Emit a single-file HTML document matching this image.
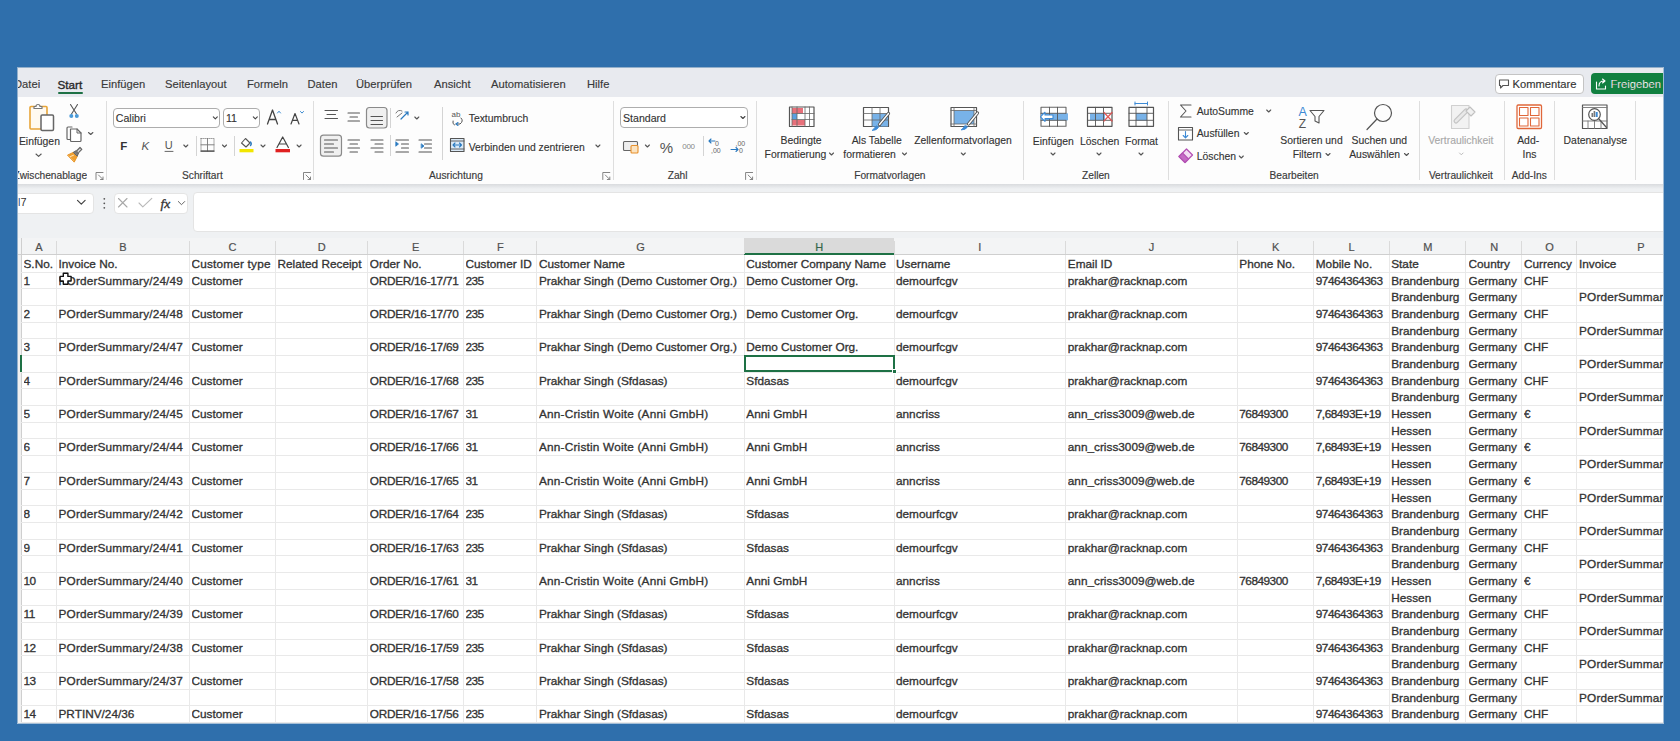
<!DOCTYPE html>
<html><head><meta charset="utf-8">
<style>
*{margin:0;padding:0;box-sizing:border-box}
html,body{width:1680px;height:741px;overflow:hidden;background:#2f6fac;font-family:"Liberation Sans",sans-serif;color:#262626}
.a{position:absolute}
#win{position:absolute;left:17.5px;top:67px;width:1646px;height:656px;background:#fff;overflow:hidden}
#tabs{position:absolute;left:0;top:67px;width:1663px;height:30.5px;background:#e8eaef}
.tab{position:absolute;top:76px;font-size:11.2px;color:#3a3a3a;white-space:nowrap;line-height:16px;-webkit-text-stroke:0.15px #3a3a3a}
#ribbon{position:absolute;left:0;top:97px;width:1663px;height:87px;background:#fdfdfd}
.sep{position:absolute;width:1px;background:#dedede}
.glab{position:absolute;top:169px;font-size:10.2px;color:#3a3a3a;white-space:nowrap;line-height:14px;-webkit-text-stroke:0.15px #3a3a3a}
.lab{position:absolute;font-size:10.4px;color:#333;white-space:nowrap;line-height:14px;-webkit-text-stroke:0.12px currentColor}
.chev{position:absolute;width:5px;height:5px;border-right:1.2px solid #555;border-bottom:1.2px solid #555;transform:rotate(45deg)}
.box{position:absolute;background:#fff;border:1px solid #b9b9b9;border-radius:4px}
#fbar{position:absolute;left:0;top:184px;width:1663px;height:54px;background:#eff1f3}
#shadow{position:absolute;left:0;top:184px;width:1663px;height:5px;background:linear-gradient(#d9dbde,#eff1f3)}
#colhdr{position:absolute;left:0;top:238px;width:1663px;height:17px;background:#f3f4f5;border-bottom:1px solid #cfcfcf}
.ch{position:absolute;top:238px;height:17px;font-size:11px;line-height:18px;text-align:center;color:#505050;-webkit-text-stroke:0.2px #505050}
.ch.sel{background:#dadada;color:#1e7145;border-bottom:2px solid #1e7145;height:17px}
.chl{position:absolute;top:241px;height:13px;width:1px;background:#dadada}
#grid{position:absolute;left:0;top:255px;width:1663px;height:470px;background:#fff}
.hl{position:absolute;left:21px;width:1650px;height:1px;background:#e9e9e9}
.vl{position:absolute;top:255px;width:1px;height:470px;background:#e9e9e9}
.c{position:absolute;height:16.68px;font-size:11.8px;line-height:18px;white-space:nowrap;overflow:hidden;color:#333;-webkit-text-stroke:0.32px #333}
svg{position:absolute;overflow:visible}
</style></head><body>

<!-- tab bar -->
<div id="tabs" style="left:17.3px;width:1646.5px"></div>
<div class="tab" style="left:14px;clip-path:inset(0 0 0 3.5px)">Datei</div>
<div class="tab" style="left:57.5px;top:76.5px;font-size:11.7px;color:#2a2a2a;-webkit-text-stroke:0.35px #2a2a2a">Start</div>
<div class="a" style="left:58.3px;top:92.3px;width:25px;height:2px;background:#1e7145;border-radius:1px"></div>
<div class="tab" style="left:101px">Einfügen</div>
<div class="tab" style="left:165px">Seitenlayout</div>
<div class="tab" style="left:247px">Formeln</div>
<div class="tab" style="left:307.5px">Daten</div>
<div class="tab" style="left:356px">Überprüfen</div>
<div class="tab" style="left:434px">Ansicht</div>
<div class="tab" style="left:491px">Automatisieren</div>
<div class="tab" style="left:587px">Hilfe</div>

<!-- Kommentare / Freigeben -->
<div class="a" style="left:1494.5px;top:73.5px;width:89px;height:20px;background:#fff;border:1px solid #c4c4c4;border-radius:4px"></div>
<div class="tab" style="left:1512.5px;top:75.5px;color:#333">Kommentare</div>
<div class="a" style="left:1591px;top:73px;width:80px;height:21px;background:#118040;border-radius:4px"></div>
<div class="tab" style="left:1610.5px;top:75.5px;color:#fff">Freigeben</div>

<!-- ribbon -->
<div id="ribbon" style="left:17.3px;width:1646.5px"></div>
<!-- separators -->
<div class="sep" style="left:105.5px;top:101px;height:79px"></div>
<div class="sep" style="left:313px;top:101px;height:79px"></div>
<div class="sep" style="left:612.5px;top:101px;height:79px"></div>
<div class="sep" style="left:755.5px;top:101px;height:79px"></div>
<div class="sep" style="left:1023.3px;top:101px;height:79px"></div>
<div class="sep" style="left:1167.7px;top:101px;height:79px"></div>
<div class="sep" style="left:1418.9px;top:101px;height:79px"></div>
<div class="sep" style="left:1503.5px;top:101px;height:79px"></div>
<div class="sep" style="left:1554.3px;top:101px;height:79px"></div>
<div class="sep" style="left:1634.5px;top:101px;height:79px"></div>
<!-- small separators -->
<div class="sep" style="left:195.7px;top:136px;height:20px;background:#d4d4d4"></div>
<div class="sep" style="left:234.3px;top:136px;height:20px;background:#d4d4d4"></div>
<div class="sep" style="left:389.7px;top:108px;height:20px;background:#d4d4d4"></div>
<div class="sep" style="left:389.7px;top:135px;height:21px;background:#d4d4d4"></div>
<div class="sep" style="left:441.6px;top:107px;height:53px;background:#d4d4d4"></div>
<div class="sep" style="left:702.7px;top:136px;height:20px;background:#d4d4d4"></div>

<!-- group labels -->
<div class="glab" style="left:13.5px;clip-path:inset(0 0 0 4px)">Zwischenablage</div>
<div class="glab" style="left:182px">Schriftart</div>
<div class="glab" style="left:429px">Ausrichtung</div>
<div class="glab" style="left:667.7px">Zahl</div>
<div class="glab" style="left:854.2px">Formatvorlagen</div>
<div class="glab" style="left:1082px">Zellen</div>
<div class="glab" style="left:1269.5px">Bearbeiten</div>
<div class="glab" style="left:1428.9px">Vertraulichkeit</div>
<div class="glab" style="left:1511.7px">Add-Ins</div>

<!-- labels -->
<div class="lab" style="left:18.9px;top:134.8px">Einfügen</div>
<div class="box" style="left:113.2px;top:107.5px;width:107.3px;height:20.5px;border-color:#adadad"></div>
<div class="lab" style="left:115.8px;top:111px;font-size:10.6px;color:#333">Calibri</div>
<div class="box" style="left:223.2px;top:107.5px;width:37.3px;height:20.5px;border-color:#adadad"></div>
<div class="lab" style="left:226px;top:111px;font-size:10.6px;color:#333">11</div>
<div class="box" style="left:620.3px;top:107.4px;width:127.8px;height:20.3px;border-color:#adadad"></div>
<div class="lab" style="left:623px;top:111px;font-size:10.6px;color:#333">Standard</div>
<div class="lab" style="left:468.7px;top:111.7px">Textumbruch</div>
<div class="lab" style="left:468.7px;top:140.6px">Verbinden und zentrieren</div>
<div class="lab" style="left:780.6px;top:134.2px">Bedingte</div>
<div class="lab" style="left:764.6px;top:147.8px">Formatierung</div>
<div class="lab" style="left:851.7px;top:134.2px">Als Tabelle</div>
<div class="lab" style="left:843.3px;top:147.8px">formatieren</div>
<div class="lab" style="left:914.2px;top:134.2px">Zellenformatvorlagen</div>
<div class="lab" style="left:1032.8px;top:134.8px">Einfügen</div>
<div class="lab" style="left:1080px;top:134.8px">Löschen</div>
<div class="lab" style="left:1125.1px;top:134.8px">Format</div>
<div class="lab" style="left:1196.7px;top:104.7px">AutoSumme</div>
<div class="lab" style="left:1196.7px;top:127.1px">Ausfüllen</div>
<div class="lab" style="left:1196.7px;top:150.3px">Löschen</div>
<div class="lab" style="left:1280.3px;top:134.1px">Sortieren und</div>
<div class="lab" style="left:1292.7px;top:148px">Filtern</div>
<div class="lab" style="left:1351.5px;top:134.1px">Suchen und</div>
<div class="lab" style="left:1349.2px;top:148px">Auswählen</div>
<div class="lab" style="left:1428.2px;top:134.1px;color:#a8a8a8">Vertraulichkeit</div>
<div class="lab" style="left:1517.2px;top:134.1px">Add-</div>
<div class="lab" style="left:1522.6px;top:148px">Ins</div>
<div class="lab" style="left:1563.6px;top:134.1px">Datenanalyse</div>


<!-- formula bar -->
<div id="fbar" style="left:17.3px;width:1646.5px"></div>
<div id="shadow" style="left:17.3px;width:1646.5px"></div>
<div class="box" style="left:12px;top:193px;width:82px;height:21px;border-color:#e4e4e4;border-radius:4px"></div>
<div class="a" style="left:17.5px;top:196px;font-size:11px;color:#333;clip-path:inset(0 0 0 1px)">I7</div>
<div class="box" style="left:114px;top:193px;width:74px;height:21px;border-color:#e4e4e4"></div>
<div class="box" style="left:193px;top:192px;width:1480px;height:39.5px;border-color:#e4e4e4"></div>
<div id="colhdr" style="left:17.3px;width:1646.5px"></div>

<!-- grid -->
<div id="grid" style="left:17.3px;width:1646.5px"></div>
<div class="a" style="left:17.3px;top:255px;width:4px;height:470px;background:#f0f0f0"></div>
<div class="a" style="left:21px;top:238px;width:1px;height:487px;background:#cfcfcf"></div>
<div class="hl" style="top:271.68px"></div>
<div class="hl" style="top:288.36px"></div>
<div class="hl" style="top:305.04px"></div>
<div class="hl" style="top:321.72px"></div>
<div class="hl" style="top:338.40px"></div>
<div class="hl" style="top:355.08px"></div>
<div class="hl" style="top:371.76px"></div>
<div class="hl" style="top:388.44px"></div>
<div class="hl" style="top:405.12px"></div>
<div class="hl" style="top:421.80px"></div>
<div class="hl" style="top:438.48px"></div>
<div class="hl" style="top:455.16px"></div>
<div class="hl" style="top:471.84px"></div>
<div class="hl" style="top:488.52px"></div>
<div class="hl" style="top:505.20px"></div>
<div class="hl" style="top:521.88px"></div>
<div class="hl" style="top:538.56px"></div>
<div class="hl" style="top:555.24px"></div>
<div class="hl" style="top:571.92px"></div>
<div class="hl" style="top:588.60px"></div>
<div class="hl" style="top:605.28px"></div>
<div class="hl" style="top:621.96px"></div>
<div class="hl" style="top:638.64px"></div>
<div class="hl" style="top:655.32px"></div>
<div class="hl" style="top:672.00px"></div>
<div class="hl" style="top:688.68px"></div>
<div class="hl" style="top:705.36px"></div>
<div class="hl" style="top:722.04px"></div>
<div class="vl" style="left:56.2px"></div>
<div class="vl" style="left:189.2px"></div>
<div class="vl" style="left:275.2px"></div>
<div class="vl" style="left:367.2px"></div>
<div class="vl" style="left:463.2px"></div>
<div class="vl" style="left:536.2px"></div>
<div class="vl" style="left:744.2px"></div>
<div class="vl" style="left:894.2px"></div>
<div class="vl" style="left:1065.2px"></div>
<div class="vl" style="left:1236.8px"></div>
<div class="vl" style="left:1313.2px"></div>
<div class="vl" style="left:1389.2px"></div>
<div class="vl" style="left:1465.2px"></div>
<div class="vl" style="left:1521.2px"></div>
<div class="vl" style="left:1575.8px"></div>
<div class="ch" style="left:21.5px;width:35.0px">A</div>
<div class="ch" style="left:56.5px;width:133.0px">B</div>
<div class="chl" style="left:56.2px"></div>
<div class="ch" style="left:189.5px;width:86.0px">C</div>
<div class="chl" style="left:189.2px"></div>
<div class="ch" style="left:275.5px;width:92.3px">D</div>
<div class="chl" style="left:275.2px"></div>
<div class="ch" style="left:367.8px;width:95.7px">E</div>
<div class="chl" style="left:367.2px"></div>
<div class="ch" style="left:463.5px;width:73.5px">F</div>
<div class="chl" style="left:463.2px"></div>
<div class="ch" style="left:537.0px;width:207.3px">G</div>
<div class="chl" style="left:536.2px"></div>
<div class="ch sel" style="left:744.3px;width:149.7px">H</div>
<div class="chl" style="left:744.2px"></div>
<div class="ch" style="left:894.0px;width:171.8px">I</div>
<div class="chl" style="left:894.2px"></div>
<div class="ch" style="left:1065.8px;width:171.5px">J</div>
<div class="chl" style="left:1065.2px"></div>
<div class="ch" style="left:1237.3px;width:76.5px">K</div>
<div class="chl" style="left:1236.8px"></div>
<div class="ch" style="left:1313.8px;width:75.4px">L</div>
<div class="chl" style="left:1313.2px"></div>
<div class="ch" style="left:1389.2px;width:77.3px">M</div>
<div class="chl" style="left:1389.2px"></div>
<div class="ch" style="left:1466.5px;width:55.5px">N</div>
<div class="chl" style="left:1465.2px"></div>
<div class="ch" style="left:1522.0px;width:55.0px">O</div>
<div class="chl" style="left:1521.2px"></div>
<div class="ch" style="left:1577.0px;width:128.0px">P</div>
<div class="chl" style="left:1575.8px"></div>
<div class="c" style="left:23.5px;top:255.00px;width:32.0px">S.No.</div>
<div class="c" style="left:58.5px;top:255.00px;width:130.0px">Invoice No.</div>
<div class="c" style="left:191.5px;top:255.00px;width:83.0px;letter-spacing:0.19px">Customer type</div>
<div class="c" style="left:277.5px;top:255.00px;width:89.3px">Related Receipt</div>
<div class="c" style="left:369.8px;top:255.00px;width:92.7px">Order No.</div>
<div class="c" style="left:465.5px;top:255.00px;width:70.5px">Customer ID</div>
<div class="c" style="left:539.0px;top:255.00px;width:204.3px">Customer Name</div>
<div class="c" style="left:746.3px;top:255.00px;width:146.7px">Customer Company Name</div>
<div class="c" style="left:896.0px;top:255.00px;width:168.8px">Username</div>
<div class="c" style="left:1067.8px;top:255.00px;width:168.5px">Email ID</div>
<div class="c" style="left:1239.3px;top:255.00px;width:73.5px">Phone No.</div>
<div class="c" style="left:1315.8px;top:255.00px;width:72.4px">Mobile No.</div>
<div class="c" style="left:1391.2px;top:255.00px;width:74.3px">State</div>
<div class="c" style="left:1468.5px;top:255.00px;width:52.5px">Country</div>
<div class="c" style="left:1524.0px;top:255.00px;width:52.0px">Currency</div>
<div class="c" style="left:1579.0px;top:255.00px;width:125.0px">Invoice</div>
<div class="c" style="left:23.5px;top:271.68px;width:32.0px;letter-spacing:-0.5px">1</div>
<div class="c" style="left:58.5px;top:271.68px;width:130.0px;letter-spacing:0.17px">POrderSummary/24/49</div>
<div class="c" style="left:191.5px;top:271.68px;width:83.0px">Customer</div>
<div class="c" style="left:369.8px;top:271.68px;width:92.7px;letter-spacing:-0.27px">ORDER/16-17/71</div>
<div class="c" style="left:465.5px;top:271.68px;width:70.5px;letter-spacing:-0.5px">235</div>
<div class="c" style="left:539.0px;top:271.68px;width:204.3px">Prakhar Singh (Demo Customer Org.)</div>
<div class="c" style="left:746.3px;top:271.68px;width:146.7px">Demo Customer Org.</div>
<div class="c" style="left:896.0px;top:271.68px;width:168.8px">demourfcgv</div>
<div class="c" style="left:1067.8px;top:271.68px;width:168.5px">prakhar@racknap.com</div>
<div class="c" style="left:1315.8px;top:271.68px;width:72.4px;letter-spacing:-0.5px">97464364363</div>
<div class="c" style="left:1391.2px;top:271.68px;width:74.3px">Brandenburg</div>
<div class="c" style="left:1468.5px;top:271.68px;width:52.5px">Germany</div>
<div class="c" style="left:1524.0px;top:271.68px;width:52.0px">CHF</div>
<div class="c" style="left:1391.2px;top:288.36px;width:74.3px">Brandenburg</div>
<div class="c" style="left:1468.5px;top:288.36px;width:52.5px">Germany</div>
<div class="c" style="left:1579.0px;top:288.36px;width:125.0px;letter-spacing:0.17px">POrderSummary/24/49</div>
<div class="c" style="left:23.5px;top:305.04px;width:32.0px;letter-spacing:-0.5px">2</div>
<div class="c" style="left:58.5px;top:305.04px;width:130.0px;letter-spacing:0.17px">POrderSummary/24/48</div>
<div class="c" style="left:191.5px;top:305.04px;width:83.0px">Customer</div>
<div class="c" style="left:369.8px;top:305.04px;width:92.7px;letter-spacing:-0.27px">ORDER/16-17/70</div>
<div class="c" style="left:465.5px;top:305.04px;width:70.5px;letter-spacing:-0.5px">235</div>
<div class="c" style="left:539.0px;top:305.04px;width:204.3px">Prakhar Singh (Demo Customer Org.)</div>
<div class="c" style="left:746.3px;top:305.04px;width:146.7px">Demo Customer Org.</div>
<div class="c" style="left:896.0px;top:305.04px;width:168.8px">demourfcgv</div>
<div class="c" style="left:1067.8px;top:305.04px;width:168.5px">prakhar@racknap.com</div>
<div class="c" style="left:1315.8px;top:305.04px;width:72.4px;letter-spacing:-0.5px">97464364363</div>
<div class="c" style="left:1391.2px;top:305.04px;width:74.3px">Brandenburg</div>
<div class="c" style="left:1468.5px;top:305.04px;width:52.5px">Germany</div>
<div class="c" style="left:1524.0px;top:305.04px;width:52.0px">CHF</div>
<div class="c" style="left:1391.2px;top:321.72px;width:74.3px">Brandenburg</div>
<div class="c" style="left:1468.5px;top:321.72px;width:52.5px">Germany</div>
<div class="c" style="left:1579.0px;top:321.72px;width:125.0px;letter-spacing:0.17px">POrderSummary/24/48</div>
<div class="c" style="left:23.5px;top:338.40px;width:32.0px;letter-spacing:-0.5px">3</div>
<div class="c" style="left:58.5px;top:338.40px;width:130.0px;letter-spacing:0.17px">POrderSummary/24/47</div>
<div class="c" style="left:191.5px;top:338.40px;width:83.0px">Customer</div>
<div class="c" style="left:369.8px;top:338.40px;width:92.7px;letter-spacing:-0.27px">ORDER/16-17/69</div>
<div class="c" style="left:465.5px;top:338.40px;width:70.5px;letter-spacing:-0.5px">235</div>
<div class="c" style="left:539.0px;top:338.40px;width:204.3px">Prakhar Singh (Demo Customer Org.)</div>
<div class="c" style="left:746.3px;top:338.40px;width:146.7px">Demo Customer Org.</div>
<div class="c" style="left:896.0px;top:338.40px;width:168.8px">demourfcgv</div>
<div class="c" style="left:1067.8px;top:338.40px;width:168.5px">prakhar@racknap.com</div>
<div class="c" style="left:1315.8px;top:338.40px;width:72.4px;letter-spacing:-0.5px">97464364363</div>
<div class="c" style="left:1391.2px;top:338.40px;width:74.3px">Brandenburg</div>
<div class="c" style="left:1468.5px;top:338.40px;width:52.5px">Germany</div>
<div class="c" style="left:1524.0px;top:338.40px;width:52.0px">CHF</div>
<div class="c" style="left:1391.2px;top:355.08px;width:74.3px">Brandenburg</div>
<div class="c" style="left:1468.5px;top:355.08px;width:52.5px">Germany</div>
<div class="c" style="left:1579.0px;top:355.08px;width:125.0px;letter-spacing:0.17px">POrderSummary/24/47</div>
<div class="c" style="left:23.5px;top:371.76px;width:32.0px;letter-spacing:-0.5px">4</div>
<div class="c" style="left:58.5px;top:371.76px;width:130.0px;letter-spacing:0.17px">POrderSummary/24/46</div>
<div class="c" style="left:191.5px;top:371.76px;width:83.0px">Customer</div>
<div class="c" style="left:369.8px;top:371.76px;width:92.7px;letter-spacing:-0.27px">ORDER/16-17/68</div>
<div class="c" style="left:465.5px;top:371.76px;width:70.5px;letter-spacing:-0.5px">235</div>
<div class="c" style="left:539.0px;top:371.76px;width:204.3px">Prakhar Singh (Sfdasas)</div>
<div class="c" style="left:746.3px;top:371.76px;width:146.7px">Sfdasas</div>
<div class="c" style="left:896.0px;top:371.76px;width:168.8px">demourfcgv</div>
<div class="c" style="left:1067.8px;top:371.76px;width:168.5px">prakhar@racknap.com</div>
<div class="c" style="left:1315.8px;top:371.76px;width:72.4px;letter-spacing:-0.5px">97464364363</div>
<div class="c" style="left:1391.2px;top:371.76px;width:74.3px">Brandenburg</div>
<div class="c" style="left:1468.5px;top:371.76px;width:52.5px">Germany</div>
<div class="c" style="left:1524.0px;top:371.76px;width:52.0px">CHF</div>
<div class="c" style="left:1391.2px;top:388.44px;width:74.3px">Brandenburg</div>
<div class="c" style="left:1468.5px;top:388.44px;width:52.5px">Germany</div>
<div class="c" style="left:1579.0px;top:388.44px;width:125.0px;letter-spacing:0.17px">POrderSummary/24/46</div>
<div class="c" style="left:23.5px;top:405.12px;width:32.0px;letter-spacing:-0.5px">5</div>
<div class="c" style="left:58.5px;top:405.12px;width:130.0px;letter-spacing:0.17px">POrderSummary/24/45</div>
<div class="c" style="left:191.5px;top:405.12px;width:83.0px">Customer</div>
<div class="c" style="left:369.8px;top:405.12px;width:92.7px;letter-spacing:-0.27px">ORDER/16-17/67</div>
<div class="c" style="left:465.5px;top:405.12px;width:70.5px;letter-spacing:-0.5px">31</div>
<div class="c" style="left:539.0px;top:405.12px;width:204.3px;letter-spacing:0.2px">Ann-Cristin Woite (Anni GmbH)</div>
<div class="c" style="left:746.3px;top:405.12px;width:146.7px">Anni GmbH</div>
<div class="c" style="left:896.0px;top:405.12px;width:168.8px">anncriss</div>
<div class="c" style="left:1067.8px;top:405.12px;width:168.5px">ann_criss3009@web.de</div>
<div class="c" style="left:1239.3px;top:405.12px;width:73.5px;letter-spacing:-0.5px">76849300</div>
<div class="c" style="left:1315.8px;top:405.12px;width:72.4px;letter-spacing:-0.5px">7,68493E+19</div>
<div class="c" style="left:1391.2px;top:405.12px;width:74.3px">Hessen</div>
<div class="c" style="left:1468.5px;top:405.12px;width:52.5px">Germany</div>
<div class="c" style="left:1524.0px;top:405.12px;width:52.0px">€</div>
<div class="c" style="left:1391.2px;top:421.80px;width:74.3px">Hessen</div>
<div class="c" style="left:1468.5px;top:421.80px;width:52.5px">Germany</div>
<div class="c" style="left:1579.0px;top:421.80px;width:125.0px;letter-spacing:0.17px">POrderSummary/24/45</div>
<div class="c" style="left:23.5px;top:438.48px;width:32.0px;letter-spacing:-0.5px">6</div>
<div class="c" style="left:58.5px;top:438.48px;width:130.0px;letter-spacing:0.17px">POrderSummary/24/44</div>
<div class="c" style="left:191.5px;top:438.48px;width:83.0px">Customer</div>
<div class="c" style="left:369.8px;top:438.48px;width:92.7px;letter-spacing:-0.27px">ORDER/16-17/66</div>
<div class="c" style="left:465.5px;top:438.48px;width:70.5px;letter-spacing:-0.5px">31</div>
<div class="c" style="left:539.0px;top:438.48px;width:204.3px;letter-spacing:0.2px">Ann-Cristin Woite (Anni GmbH)</div>
<div class="c" style="left:746.3px;top:438.48px;width:146.7px">Anni GmbH</div>
<div class="c" style="left:896.0px;top:438.48px;width:168.8px">anncriss</div>
<div class="c" style="left:1067.8px;top:438.48px;width:168.5px">ann_criss3009@web.de</div>
<div class="c" style="left:1239.3px;top:438.48px;width:73.5px;letter-spacing:-0.5px">76849300</div>
<div class="c" style="left:1315.8px;top:438.48px;width:72.4px;letter-spacing:-0.5px">7,68493E+19</div>
<div class="c" style="left:1391.2px;top:438.48px;width:74.3px">Hessen</div>
<div class="c" style="left:1468.5px;top:438.48px;width:52.5px">Germany</div>
<div class="c" style="left:1524.0px;top:438.48px;width:52.0px">€</div>
<div class="c" style="left:1391.2px;top:455.16px;width:74.3px">Hessen</div>
<div class="c" style="left:1468.5px;top:455.16px;width:52.5px">Germany</div>
<div class="c" style="left:1579.0px;top:455.16px;width:125.0px;letter-spacing:0.17px">POrderSummary/24/44</div>
<div class="c" style="left:23.5px;top:471.84px;width:32.0px;letter-spacing:-0.5px">7</div>
<div class="c" style="left:58.5px;top:471.84px;width:130.0px;letter-spacing:0.17px">POrderSummary/24/43</div>
<div class="c" style="left:191.5px;top:471.84px;width:83.0px">Customer</div>
<div class="c" style="left:369.8px;top:471.84px;width:92.7px;letter-spacing:-0.27px">ORDER/16-17/65</div>
<div class="c" style="left:465.5px;top:471.84px;width:70.5px;letter-spacing:-0.5px">31</div>
<div class="c" style="left:539.0px;top:471.84px;width:204.3px;letter-spacing:0.2px">Ann-Cristin Woite (Anni GmbH)</div>
<div class="c" style="left:746.3px;top:471.84px;width:146.7px">Anni GmbH</div>
<div class="c" style="left:896.0px;top:471.84px;width:168.8px">anncriss</div>
<div class="c" style="left:1067.8px;top:471.84px;width:168.5px">ann_criss3009@web.de</div>
<div class="c" style="left:1239.3px;top:471.84px;width:73.5px;letter-spacing:-0.5px">76849300</div>
<div class="c" style="left:1315.8px;top:471.84px;width:72.4px;letter-spacing:-0.5px">7,68493E+19</div>
<div class="c" style="left:1391.2px;top:471.84px;width:74.3px">Hessen</div>
<div class="c" style="left:1468.5px;top:471.84px;width:52.5px">Germany</div>
<div class="c" style="left:1524.0px;top:471.84px;width:52.0px">€</div>
<div class="c" style="left:1391.2px;top:488.52px;width:74.3px">Hessen</div>
<div class="c" style="left:1468.5px;top:488.52px;width:52.5px">Germany</div>
<div class="c" style="left:1579.0px;top:488.52px;width:125.0px;letter-spacing:0.17px">POrderSummary/24/43</div>
<div class="c" style="left:23.5px;top:505.20px;width:32.0px;letter-spacing:-0.5px">8</div>
<div class="c" style="left:58.5px;top:505.20px;width:130.0px;letter-spacing:0.17px">POrderSummary/24/42</div>
<div class="c" style="left:191.5px;top:505.20px;width:83.0px">Customer</div>
<div class="c" style="left:369.8px;top:505.20px;width:92.7px;letter-spacing:-0.27px">ORDER/16-17/64</div>
<div class="c" style="left:465.5px;top:505.20px;width:70.5px;letter-spacing:-0.5px">235</div>
<div class="c" style="left:539.0px;top:505.20px;width:204.3px">Prakhar Singh (Sfdasas)</div>
<div class="c" style="left:746.3px;top:505.20px;width:146.7px">Sfdasas</div>
<div class="c" style="left:896.0px;top:505.20px;width:168.8px">demourfcgv</div>
<div class="c" style="left:1067.8px;top:505.20px;width:168.5px">prakhar@racknap.com</div>
<div class="c" style="left:1315.8px;top:505.20px;width:72.4px;letter-spacing:-0.5px">97464364363</div>
<div class="c" style="left:1391.2px;top:505.20px;width:74.3px">Brandenburg</div>
<div class="c" style="left:1468.5px;top:505.20px;width:52.5px">Germany</div>
<div class="c" style="left:1524.0px;top:505.20px;width:52.0px">CHF</div>
<div class="c" style="left:1391.2px;top:521.88px;width:74.3px">Brandenburg</div>
<div class="c" style="left:1468.5px;top:521.88px;width:52.5px">Germany</div>
<div class="c" style="left:1579.0px;top:521.88px;width:125.0px;letter-spacing:0.17px">POrderSummary/24/42</div>
<div class="c" style="left:23.5px;top:538.56px;width:32.0px;letter-spacing:-0.5px">9</div>
<div class="c" style="left:58.5px;top:538.56px;width:130.0px;letter-spacing:0.17px">POrderSummary/24/41</div>
<div class="c" style="left:191.5px;top:538.56px;width:83.0px">Customer</div>
<div class="c" style="left:369.8px;top:538.56px;width:92.7px;letter-spacing:-0.27px">ORDER/16-17/63</div>
<div class="c" style="left:465.5px;top:538.56px;width:70.5px;letter-spacing:-0.5px">235</div>
<div class="c" style="left:539.0px;top:538.56px;width:204.3px">Prakhar Singh (Sfdasas)</div>
<div class="c" style="left:746.3px;top:538.56px;width:146.7px">Sfdasas</div>
<div class="c" style="left:896.0px;top:538.56px;width:168.8px">demourfcgv</div>
<div class="c" style="left:1067.8px;top:538.56px;width:168.5px">prakhar@racknap.com</div>
<div class="c" style="left:1315.8px;top:538.56px;width:72.4px;letter-spacing:-0.5px">97464364363</div>
<div class="c" style="left:1391.2px;top:538.56px;width:74.3px">Brandenburg</div>
<div class="c" style="left:1468.5px;top:538.56px;width:52.5px">Germany</div>
<div class="c" style="left:1524.0px;top:538.56px;width:52.0px">CHF</div>
<div class="c" style="left:1391.2px;top:555.24px;width:74.3px">Brandenburg</div>
<div class="c" style="left:1468.5px;top:555.24px;width:52.5px">Germany</div>
<div class="c" style="left:1579.0px;top:555.24px;width:125.0px;letter-spacing:0.17px">POrderSummary/24/41</div>
<div class="c" style="left:23.5px;top:571.92px;width:32.0px;letter-spacing:-0.5px">10</div>
<div class="c" style="left:58.5px;top:571.92px;width:130.0px;letter-spacing:0.17px">POrderSummary/24/40</div>
<div class="c" style="left:191.5px;top:571.92px;width:83.0px">Customer</div>
<div class="c" style="left:369.8px;top:571.92px;width:92.7px;letter-spacing:-0.27px">ORDER/16-17/61</div>
<div class="c" style="left:465.5px;top:571.92px;width:70.5px;letter-spacing:-0.5px">31</div>
<div class="c" style="left:539.0px;top:571.92px;width:204.3px;letter-spacing:0.2px">Ann-Cristin Woite (Anni GmbH)</div>
<div class="c" style="left:746.3px;top:571.92px;width:146.7px">Anni GmbH</div>
<div class="c" style="left:896.0px;top:571.92px;width:168.8px">anncriss</div>
<div class="c" style="left:1067.8px;top:571.92px;width:168.5px">ann_criss3009@web.de</div>
<div class="c" style="left:1239.3px;top:571.92px;width:73.5px;letter-spacing:-0.5px">76849300</div>
<div class="c" style="left:1315.8px;top:571.92px;width:72.4px;letter-spacing:-0.5px">7,68493E+19</div>
<div class="c" style="left:1391.2px;top:571.92px;width:74.3px">Hessen</div>
<div class="c" style="left:1468.5px;top:571.92px;width:52.5px">Germany</div>
<div class="c" style="left:1524.0px;top:571.92px;width:52.0px">€</div>
<div class="c" style="left:1391.2px;top:588.60px;width:74.3px">Hessen</div>
<div class="c" style="left:1468.5px;top:588.60px;width:52.5px">Germany</div>
<div class="c" style="left:1579.0px;top:588.60px;width:125.0px;letter-spacing:0.17px">POrderSummary/24/40</div>
<div class="c" style="left:23.5px;top:605.28px;width:32.0px;letter-spacing:-0.5px">11</div>
<div class="c" style="left:58.5px;top:605.28px;width:130.0px;letter-spacing:0.17px">POrderSummary/24/39</div>
<div class="c" style="left:191.5px;top:605.28px;width:83.0px">Customer</div>
<div class="c" style="left:369.8px;top:605.28px;width:92.7px;letter-spacing:-0.27px">ORDER/16-17/60</div>
<div class="c" style="left:465.5px;top:605.28px;width:70.5px;letter-spacing:-0.5px">235</div>
<div class="c" style="left:539.0px;top:605.28px;width:204.3px">Prakhar Singh (Sfdasas)</div>
<div class="c" style="left:746.3px;top:605.28px;width:146.7px">Sfdasas</div>
<div class="c" style="left:896.0px;top:605.28px;width:168.8px">demourfcgv</div>
<div class="c" style="left:1067.8px;top:605.28px;width:168.5px">prakhar@racknap.com</div>
<div class="c" style="left:1315.8px;top:605.28px;width:72.4px;letter-spacing:-0.5px">97464364363</div>
<div class="c" style="left:1391.2px;top:605.28px;width:74.3px">Brandenburg</div>
<div class="c" style="left:1468.5px;top:605.28px;width:52.5px">Germany</div>
<div class="c" style="left:1524.0px;top:605.28px;width:52.0px">CHF</div>
<div class="c" style="left:1391.2px;top:621.96px;width:74.3px">Brandenburg</div>
<div class="c" style="left:1468.5px;top:621.96px;width:52.5px">Germany</div>
<div class="c" style="left:1579.0px;top:621.96px;width:125.0px;letter-spacing:0.17px">POrderSummary/24/39</div>
<div class="c" style="left:23.5px;top:638.64px;width:32.0px;letter-spacing:-0.5px">12</div>
<div class="c" style="left:58.5px;top:638.64px;width:130.0px;letter-spacing:0.17px">POrderSummary/24/38</div>
<div class="c" style="left:191.5px;top:638.64px;width:83.0px">Customer</div>
<div class="c" style="left:369.8px;top:638.64px;width:92.7px;letter-spacing:-0.27px">ORDER/16-17/59</div>
<div class="c" style="left:465.5px;top:638.64px;width:70.5px;letter-spacing:-0.5px">235</div>
<div class="c" style="left:539.0px;top:638.64px;width:204.3px">Prakhar Singh (Sfdasas)</div>
<div class="c" style="left:746.3px;top:638.64px;width:146.7px">Sfdasas</div>
<div class="c" style="left:896.0px;top:638.64px;width:168.8px">demourfcgv</div>
<div class="c" style="left:1067.8px;top:638.64px;width:168.5px">prakhar@racknap.com</div>
<div class="c" style="left:1315.8px;top:638.64px;width:72.4px;letter-spacing:-0.5px">97464364363</div>
<div class="c" style="left:1391.2px;top:638.64px;width:74.3px">Brandenburg</div>
<div class="c" style="left:1468.5px;top:638.64px;width:52.5px">Germany</div>
<div class="c" style="left:1524.0px;top:638.64px;width:52.0px">CHF</div>
<div class="c" style="left:1391.2px;top:655.32px;width:74.3px">Brandenburg</div>
<div class="c" style="left:1468.5px;top:655.32px;width:52.5px">Germany</div>
<div class="c" style="left:1579.0px;top:655.32px;width:125.0px;letter-spacing:0.17px">POrderSummary/24/38</div>
<div class="c" style="left:23.5px;top:672.00px;width:32.0px;letter-spacing:-0.5px">13</div>
<div class="c" style="left:58.5px;top:672.00px;width:130.0px;letter-spacing:0.17px">POrderSummary/24/37</div>
<div class="c" style="left:191.5px;top:672.00px;width:83.0px">Customer</div>
<div class="c" style="left:369.8px;top:672.00px;width:92.7px;letter-spacing:-0.27px">ORDER/16-17/58</div>
<div class="c" style="left:465.5px;top:672.00px;width:70.5px;letter-spacing:-0.5px">235</div>
<div class="c" style="left:539.0px;top:672.00px;width:204.3px">Prakhar Singh (Sfdasas)</div>
<div class="c" style="left:746.3px;top:672.00px;width:146.7px">Sfdasas</div>
<div class="c" style="left:896.0px;top:672.00px;width:168.8px">demourfcgv</div>
<div class="c" style="left:1067.8px;top:672.00px;width:168.5px">prakhar@racknap.com</div>
<div class="c" style="left:1315.8px;top:672.00px;width:72.4px;letter-spacing:-0.5px">97464364363</div>
<div class="c" style="left:1391.2px;top:672.00px;width:74.3px">Brandenburg</div>
<div class="c" style="left:1468.5px;top:672.00px;width:52.5px">Germany</div>
<div class="c" style="left:1524.0px;top:672.00px;width:52.0px">CHF</div>
<div class="c" style="left:1391.2px;top:688.68px;width:74.3px">Brandenburg</div>
<div class="c" style="left:1468.5px;top:688.68px;width:52.5px">Germany</div>
<div class="c" style="left:1579.0px;top:688.68px;width:125.0px;letter-spacing:0.17px">POrderSummary/24/37</div>
<div class="c" style="left:23.5px;top:705.36px;width:32.0px;letter-spacing:-0.5px">14</div>
<div class="c" style="left:58.5px;top:705.36px;width:130.0px">PRTINV/24/36</div>
<div class="c" style="left:191.5px;top:705.36px;width:83.0px">Customer</div>
<div class="c" style="left:369.8px;top:705.36px;width:92.7px;letter-spacing:-0.27px">ORDER/16-17/56</div>
<div class="c" style="left:465.5px;top:705.36px;width:70.5px;letter-spacing:-0.5px">235</div>
<div class="c" style="left:539.0px;top:705.36px;width:204.3px">Prakhar Singh (Sfdasas)</div>
<div class="c" style="left:746.3px;top:705.36px;width:146.7px">Sfdasas</div>
<div class="c" style="left:896.0px;top:705.36px;width:168.8px">demourfcgv</div>
<div class="c" style="left:1067.8px;top:705.36px;width:168.5px">prakhar@racknap.com</div>
<div class="c" style="left:1315.8px;top:705.36px;width:72.4px;letter-spacing:-0.5px">97464364363</div>
<div class="c" style="left:1391.2px;top:705.36px;width:74.3px">Brandenburg</div>
<div class="c" style="left:1468.5px;top:705.36px;width:52.5px">Germany</div>
<div class="c" style="left:1524.0px;top:705.36px;width:52.0px">CHF</div>
<div class="c" style="left:1391.2px;top:722.04px;width:74.3px">Brandenburg</div>
<div class="c" style="left:1468.5px;top:722.04px;width:52.5px">Germany</div>
<div class="c" style="left:1579.0px;top:722.04px;width:125.0px;letter-spacing:0.17px">POrderSummary/24/36</div>
<div class="a" style="left:19.5px;top:354.6px;width:2px;height:17.5px;background:#1e7145"></div>
<div class="a" style="left:744px;top:354.6px;width:151px;height:17.5px;border:2px solid #1e7145"></div>
<div class="a" style="left:892px;top:369px;width:5px;height:5px;background:#1e7145;border:1px solid #fff"></div>

<svg style="left:0;top:0" width="1680" height="741" viewBox="0 0 1680 741" fill="none" stroke-linecap="round" stroke-linejoin="round">
<!-- Clipboard -->
<rect x="30" y="106.5" width="17" height="22.5" rx="1" stroke="#e8a538" stroke-width="1.6" fill="#fffaf0"/>
<path d="M34 108.5 h8 v-2 h-2 a2 2 0 0 0 -4 0 h-2 z" stroke="#777" stroke-width="1.2" fill="#fff"/>
<rect x="41" y="115" width="12.5" height="15.5" rx="1.2" stroke="#666" stroke-width="1.5" fill="#fff"/>
<path d="M36 154 l2.6 2.4 l2.6 -2.4" stroke="#555" stroke-width="1.1"/>
<!-- Scissors -->
<path d="M70.5 104.5 L76.5 114 M77.5 104.5 L71.5 114" stroke="#555" stroke-width="1.1"/>
<circle cx="71.3" cy="116" r="2" fill="#4a9ad8"/>
<circle cx="76.8" cy="116" r="2" fill="#4a9ad8"/>
<!-- Copy -->
<path d="M72 127 h-4 a1 1 0 0 0 -1 1 v10.5 a1 1 0 0 0 1 1 h2" stroke="#666" stroke-width="1.2"/>
<path d="M70.5 129 h6.5 l4 4 v7.5 a1 1 0 0 1 -1 1 h-8.5 a1 1 0 0 1 -1 -1 z" stroke="#666" stroke-width="1.2" fill="#fff"/>
<path d="M77 129 v4 h4" stroke="#666" stroke-width="1"/>
<path d="M88.5 132.5 l2.2 2 l2.2 -2" stroke="#555" stroke-width="1.1"/>
<!-- Format painter -->
<path d="M67.8 155 l5.8 -2.8 l3.8 3.8 l-3 5.8 z" fill="#f0a030" stroke="#e8962a" stroke-width="1"/>
<path d="M70.5 156.5 l3 -1.2" stroke="#fde7c0" stroke-width="1"/>
<path d="M73.6 152.2 l2.6 -1.6 l2.4 2.4 l-1.2 2.8 z" fill="#777" stroke="#666" stroke-width="1"/>
<path d="M77 150.5 l3 -3 l1.8 1.8 l-3 3" stroke="#666" stroke-width="1.2" fill="#ddd"/>
<!-- launcher icons -->
<g stroke="#777" stroke-width="0.9">
<path d="M96 179.5 v-7 h7 M98.5 175 l4.5 4.5 M103 177 v2.5 h-2.5"/>
<path d="M303.5 179.5 v-7 h7 M306 175 l4.5 4.5 M310.5 177 v2.5 h-2.5"/>
<path d="M602.8 179.5 v-7 h7 M605.3 175 l4.5 4.5 M609.8 177 v2.5 h-2.5"/>
<path d="M745.6 179.5 v-7 h7 M748.1 175 l4.5 4.5 M752.6 177 v2.5 h-2.5"/>
</g>
<!-- font dropdown chevrons -->
<g stroke="#444" stroke-width="1.1">
<path d="M213.3 116.8 l2 2 l2 -2"/>
<path d="M253.3 116.8 l2 2 l2 -2"/>
<path d="M740.9 116.5 l2 2 l2 -2"/>
</g>
<!-- Grow/shrink font -->
<path d="M267.5 124 L272.5 110 L277.5 124 M269.3 119.5 h6.4" stroke="#444" stroke-width="1.3"/>
<path d="M277.5 113 l1.5 -1.8 l1.5 1.8" stroke="#3a8ad0" stroke-width="1"/>
<path d="M291 124 L295 113.5 L299 124 M292.3 120.3 h5.4" stroke="#444" stroke-width="1.2"/>
<path d="M300.5 111.5 l1.5 1.6 l1.5 -1.6" stroke="#3a8ad0" stroke-width="1"/>
<!-- F K U -->
<text x="120.3" y="149.6" font-family="Liberation Sans" font-weight="bold" font-size="11.5" fill="#333" stroke="none">F</text>
<text x="141.5" y="149.6" font-family="Liberation Sans" font-style="italic" font-size="11.5" fill="#555" stroke="none">K</text>
<text x="164.8" y="148.6" font-family="Liberation Sans" font-size="11" fill="#555" stroke="none">U</text>
<path d="M165 151.4 h8" stroke="#666" stroke-width="1"/>
<g stroke="#555" stroke-width="1.1">
<path d="M183.8 145 l2 2 l2 -2"/>
<path d="M222.5 145 l2 2 l2 -2"/>
<path d="M261 145 l2 2 l2 -2"/>
<path d="M297.1 145 l2 2 l2 -2"/>
</g>
<!-- borders icon -->
<rect x="201" y="138.5" width="13" height="12.5" stroke="#888" stroke-width="0.8" stroke-dasharray="1 1"/>
<path d="M207.5 138.5 v12.5 M201 144.8 h13" stroke="#777" stroke-width="0.9"/>
<path d="M201 151.2 h13" stroke="#444" stroke-width="1.3"/>
<!-- fill color -->
<path d="M241.5 143 l4 -4.5 l4.5 4.5 l-4 4 z" stroke="#555" stroke-width="1.1" fill="#fff"/>
<path d="M250.5 142 q1.5 2 0 3.5" stroke="#2a7ac0" stroke-width="1.4"/>
<rect x="239.5" y="149" width="14" height="3.3" fill="#f2e600"/>
<!-- font color -->
<path d="M277 147.5 L282.7 137 L288.4 147.5 M279 144 h7.4" stroke="#444" stroke-width="1.2"/>
<rect x="275.5" y="149" width="14.5" height="3.3" fill="#e02020"/>

<!-- Alignment icons -->
<rect x="366.5" y="107.5" width="20.5" height="20.5" rx="3" stroke="#8a8a8a" stroke-width="1.2" fill="#f0f0f0"/>
<rect x="320.5" y="135.2" width="21" height="21" rx="3" stroke="#8a8a8a" stroke-width="1.2" fill="#f0f0f0"/>
<g stroke="#555" stroke-width="1.1">
<path d="M325 110.5 h12.5 M327 114.5 h8.5 M325 118.5 h12.5"/>
<path d="M348 113 h11.5 M350 117 h7.5 M348 121 h11.5"/>
<path d="M371 116.5 h11.5 M371 120.5 h11.5 M371 124.5 h11.5"/>
<path d="M324.5 140 h13 M324.5 144 h9 M324.5 148 h13 M324.5 152 h9"/>
<path d="M348 140 h11.5 M350 144 h7.5 M348 148 h11.5 M350 152 h7.5"/>
<path d="M371 140 h12 M375 144 h8 M371 148 h12 M375 152 h8"/>
<path d="M396 140 h12.5 M401.5 144 h7 M401.5 148 h7 M396 152 h12.5"/>
<path d="M419 140 h12.5 M424.5 144 h7 M424.5 148 h7 M419 152 h12.5"/>
</g>
<path d="M396 146 l2.5 -2 l-2.5 -2 z" fill="#2a7ac0" stroke="#2a7ac0" stroke-width="0.8"/>
<path d="M421.5 144 l2.5 2 l-2.5 2 z" fill="#2a7ac0" stroke="#2a7ac0" stroke-width="0.8"/>
<!-- orientation -->
<path d="M396 113 q2 -4 6 -2 M397 117 l5 -4" stroke="#777" stroke-width="1"/>
<path d="M401 119 l7 -7 M405 112 h3 v3" stroke="#2a7ac0" stroke-width="1.2"/>
<path d="M414.8 117 l2 2 l2 -2" stroke="#555" stroke-width="1.1"/>
<!-- Textumbruch icon -->
<text x="451.5" y="117" font-family="Liberation Sans" font-size="8" fill="#555" stroke="none">ab</text>
<path d="M453 121 q-1 3 1.5 4 M461 118 q3 3 -1 6 h-4" stroke="#555" stroke-width="1"/>
<path d="M458 122.5 l-2 1.5 l2 1.5" stroke="#2a7ac0" stroke-width="1.1"/>
<!-- Verbinden icon -->
<rect x="450.5" y="138.5" width="13.5" height="13" stroke="#555" stroke-width="1.1" fill="#dbeaf7"/>
<path d="M450.5 141 h13.5 M450.5 149 h13.5" stroke="#555" stroke-width="0.9"/>
<path d="M453 145 h8.5 M455 143 l-2 2 l2 2 M459.5 143 l2 2 l-2 2" stroke="#2a7ac0" stroke-width="1.1"/>
<path d="M595.9 145 l2 2 l2 -2" stroke="#555" stroke-width="1.1"/>

<!-- Zahl -->
<rect x="623.5" y="141.5" width="14" height="9" rx="1" stroke="#666" stroke-width="1.1" fill="#eee"/>
<rect x="631" y="145.5" width="7" height="7.5" rx="1" stroke="#e8902a" stroke-width="1.1" fill="#fbe3c0"/>
<path d="M645.4 145 l2 2 l2 -2" stroke="#555" stroke-width="1.1"/>
<text x="659.8" y="152.5" font-family="Liberation Sans" font-size="15" fill="#555" stroke="none">%</text>
<text x="682.3" y="149" font-family="Liberation Sans" font-size="8" fill="#888" stroke="none" letter-spacing="-0.3">000</text>
<text x="715" y="146" font-family="Liberation Sans" font-size="7" fill="#666" stroke="none">0</text>
<text x="711" y="152.5" font-family="Liberation Sans" font-size="7" fill="#666" stroke="none">,00</text>
<path d="M715 141 h-6 M711 139 l-2 2 l2 2" stroke="#2a7ac0" stroke-width="1.1"/>
<text x="735.5" y="145.5" font-family="Liberation Sans" font-size="7" fill="#666" stroke="none">,00</text>
<text x="739" y="152.5" font-family="Liberation Sans" font-size="7" fill="#666" stroke="none">0</text>
<path d="M731 149.5 h7 M736 147.5 l2 2 l-2 2" stroke="#2a7ac0" stroke-width="1.1"/>

<!-- Bedingte Formatierung icon -->
<g>
<rect x="789.5" y="107" width="24.5" height="19.5" stroke="#555" stroke-width="1.2" fill="#fff"/>
<rect x="792" y="108" width="11" height="5.5" fill="#e8707a"/>
<rect x="792" y="114" width="5" height="5.5" fill="#5aa0e0"/>
<rect x="792" y="120" width="13" height="5.5" fill="#e8707a"/>
<path d="M792 113.5 h22 M792 119.5 h22 M797 107 v19.5 M805 107 v19.5 M809.5 107 v19.5 M792 107 v19.5" stroke="#666" stroke-width="0.8"/>
</g>
<path d="M829.5 153 l2 2 l2 -2" stroke="#555" stroke-width="1.1"/>
<!-- Als Tabelle -->
<rect x="863.5" y="107.5" width="25" height="19" stroke="#555" stroke-width="1.2" fill="#fff"/>
<rect x="872" y="113.5" width="16" height="13" fill="#78b2e8"/>
<path d="M863.5 113.5 h25 M863.5 120 h25 M872 107.5 v19 M880 107.5 v19" stroke="#666" stroke-width="0.8"/>
<path d="M888.5 113.5 l-9 11" stroke="#555" stroke-width="3.2"/>
<path d="M888.5 113.5 l-9 11" stroke="#fff" stroke-width="1.4"/>
<path d="M876 126 q-2 3 -4 4.5 q5 0 6.5 -3 z" fill="#3d8ad5" stroke="#3d8ad5" stroke-width="0.8"/>
<path d="M902.5 153 l2 2 l2 -2" stroke="#555" stroke-width="1.1"/>
<!-- Zellenformatvorlagen -->
<rect x="951" y="107.5" width="25.5" height="19" stroke="#555" stroke-width="1.2" fill="#fff"/>
<rect x="954" y="110.5" width="20" height="13.5" fill="#78b2e8"/>
<path d="M951 110.5 h25.5 M951 124 h25.5 M954 107.5 v19 M974 107.5 v19" stroke="#666" stroke-width="0.8"/>
<path d="M977.5 113 l-9 11" stroke="#555" stroke-width="3.2"/>
<path d="M977.5 113 l-9 11" stroke="#fff" stroke-width="1.4"/>
<path d="M965 125.5 q-2 3 -4 4.5 q5 0 6.5 -3 z" fill="#3d8ad5" stroke="#3d8ad5" stroke-width="0.8"/>
<path d="M961.3 153 l2 2 l2 -2" stroke="#555" stroke-width="1.1"/>

<!-- Zellen: Einfuegen -->
<rect x="1041" y="107.3" width="25" height="19" stroke="#666" stroke-width="1.1" fill="#fff"/>
<rect x="1041" y="113.3" width="27" height="7" fill="#78b2e8"/>
<path d="M1041 113.3 h25 M1041 120.3 h25 M1049.5 107.3 v19 M1057.5 107.3 v19" stroke="#555" stroke-width="0.9"/>
<path d="M1053 115 h-8 v-2.8 l-4.5 4.6 l4.5 4.6 v-2.8 h8 z" fill="#fff" stroke="#3d8ad5" stroke-width="1.1"/>
<path d="M1051 153 l2 2 l2 -2" stroke="#555" stroke-width="1.1"/>
<!-- Zellen: Loeschen -->
<rect x="1087.5" y="107.3" width="24.5" height="19" stroke="#555" stroke-width="1.2" fill="#fff"/>
<rect x="1090" y="113.3" width="15" height="7" fill="#78b2e8"/>
<path d="M1087.5 113.3 h24.5 M1087.5 120.3 h24.5 M1095.5 107.3 v19 M1103.5 107.3 v19" stroke="#555" stroke-width="0.9"/>
<path d="M1104 112.5 l8 8.5 M1112 112.5 l-8 8.5" stroke="#e05555" stroke-width="1.2"/>
<path d="M1097 153 l2 2 l2 -2" stroke="#555" stroke-width="1.1"/>
<!-- Zellen: Format -->
<rect x="1129" y="107.3" width="24.5" height="19" stroke="#555" stroke-width="1.2" fill="#fff"/>
<rect x="1136" y="113" width="11" height="7.5" fill="#78b2e8"/>
<path d="M1129 113.3 h24.5 M1129 120.3 h24.5 M1136 107.3 v19 M1147 107.3 v19" stroke="#555" stroke-width="0.9"/>
<path d="M1135 103.5 h12.5 M1135 102 v3 M1147.5 102 v3" stroke="#3d8ad5" stroke-width="1"/>
<path d="M1139 153 l2 2 l2 -2" stroke="#555" stroke-width="1.1"/>

<!-- Bearbeiten -->
<path d="M1191 105 h-10.5 l5.5 6 l-5.5 6 h10.5" stroke="#555" stroke-width="1.1"/>
<path d="M1266.7 110 l2 2 l2 -2" stroke="#555" stroke-width="1.1"/>
<rect x="1178.5" y="127.5" width="14" height="12.5" stroke="#555" stroke-width="1.1" fill="#fff"/>
<path d="M1178.5 130 h14" stroke="#555" stroke-width="0.9"/>
<path d="M1185.5 131.5 v6 M1183.2 135.5 l2.3 2.3 l2.3 -2.3" stroke="#3d8ad5" stroke-width="1.1"/>
<path d="M1244.3 132.5 l2 2 l2 -2" stroke="#555" stroke-width="1.1"/>
<path d="M1179 156.5 l7.5 -7.5 l6 6 l-7.5 7.5 z" fill="#f3dcf3" stroke="#b452b4" stroke-width="1.3"/>
<path d="M1179 156.5 l3.5 -3.5 l6 6 l-3.5 3.5 z" fill="#c46ac4" stroke="#b452b4" stroke-width="1.1"/>
<path d="M1239.3 156 l2 2 l2 -2" stroke="#555" stroke-width="1.1"/>
<!-- Sort -->
<text x="1298.5" y="116" font-family="Liberation Sans" font-size="12.5" fill="#3d8ad5" stroke="none">A</text>
<text x="1298.8" y="128.3" font-family="Liberation Sans" font-size="12" fill="#555" stroke="none">Z</text>
<path d="M1310 110.5 h14 l-5 6 v6.5 l-4 -2 v-4.5 z" stroke="#555" stroke-width="1.1"/>
<path d="M1326 153.5 l2 2 l2 -2" stroke="#555" stroke-width="1.1"/>
<!-- Search -->
<circle cx="1383" cy="113" r="8.5" stroke="#555" stroke-width="1.2"/>
<path d="M1377 119 l-10 10.5" stroke="#555" stroke-width="1.2"/>
<path d="M1404.5 153.5 l2 2 l2 -2" stroke="#555" stroke-width="1.1"/>
<!-- Vertraulichkeit (disabled) -->
<rect x="1451.5" y="105.5" width="17.5" height="23" fill="#f2f2f2" stroke="#d0d0d0" stroke-width="1.1"/>
<path d="M1456 121 l10 -10" stroke="#c4c4c4" stroke-width="5"/>
<path d="M1456 121 l10 -10" stroke="#e8e8e8" stroke-width="2.6"/>
<path d="M1466 111 l4 -4 l5 5 l-4 4 z" stroke="#c0c0c0" stroke-width="1.1" fill="#f0f0f0"/>
<path d="M1459.5 153 l1.8 1.8 l1.8 -1.8" stroke="#bbb" stroke-width="1"/>
<!-- Add-ins -->
<rect x="1517" y="105" width="24.5" height="23.5" rx="1.2" stroke="#e0673a" stroke-width="1.3" fill="#fff"/>
<rect x="1519.5" y="107.5" width="8.5" height="8" stroke="#e0673a" stroke-width="1.1"/>
<rect x="1530.5" y="107.5" width="8.5" height="8" stroke="#e0673a" stroke-width="1.1"/>
<rect x="1519.5" y="118" width="8.5" height="8" stroke="#e0673a" stroke-width="1.1"/>
<rect x="1530.5" y="118" width="8.5" height="8" stroke="#e0673a" stroke-width="1.1"/>
<!-- Datenanalyse -->
<rect x="1582.5" y="105" width="24.5" height="23.5" stroke="#555" stroke-width="1.2" fill="#fff"/>
<path d="M1582.5 107.5 h24.5 M1582.5 121 h24.5 M1588 121 v7.5 M1594.5 121 v7.5 M1601 121 v7.5" stroke="#777" stroke-width="0.9"/>
<circle cx="1594.5" cy="114.5" r="5.8" stroke="#555" stroke-width="1.2" fill="#fff"/>
<path d="M1598.5 118.5 l8 9" stroke="#555" stroke-width="1.2"/>
<rect x="1591.5" y="113" width="1.6" height="4" fill="#777"/>
<rect x="1593.6" y="111" width="1.6" height="6" fill="#777"/>
<rect x="1595.7" y="112" width="2" height="5" fill="#3d8ad5"/>

<!-- Kommentare icon -->
<path d="M1499.5 80 h9 v5.5 h-5.5 l-2.5 2.5 v-2.5 h-1 z" stroke="#555" stroke-width="1.1"/>
<!-- Freigeben icon -->
<path d="M1596.5 82 v7 h9 v-3" stroke="#fff" stroke-width="1.1"/>
<path d="M1599 86 q0 -5 5 -5 M1602.5 79 l2.5 2 l-2.5 2" stroke="#fff" stroke-width="1.1"/>

<!-- name box chevron, formula icons -->
<path d="M77.5 200.3 l3.8 3.8 l3.8 -3.8" stroke="#444" stroke-width="1.2"/>
<circle cx="104.3" cy="198.8" r="0.9" fill="#555" stroke="none"/>
<circle cx="104.3" cy="203.3" r="0.9" fill="#555" stroke="none"/>
<circle cx="104.3" cy="207.8" r="0.9" fill="#555" stroke="none"/>
<path d="M118.5 198.5 l8.5 8.5 M127 198.5 l-8.5 8.5" stroke="#a8a8a8" stroke-width="1.1"/>
<path d="M139 203 l3.8 3.8 l9 -8.5" stroke="#b8b8b8" stroke-width="1.1"/>
<text x="160.5" y="208" font-family="Liberation Serif" font-style="italic" font-size="13.5" fill="#333" stroke="#333" stroke-width="0.35">fx</text>
<path d="M178.3 201.5 l3.2 3.2 l3.2 -3.2" stroke="#666" stroke-width="1"/>

<!-- cursor cross -->
<path d="M63.3 273.2 L67.9 273.2 L67.9 276.4 L71.1 276.4 L71.1 281.0 L67.9 281.0 L67.9 284.2 L63.3 284.2 L63.3 281.0 L60.1 281.0 L60.1 276.4 L63.3 276.4 z" fill="#fff" stroke="#111" stroke-width="1.4"/>
</svg>

<!-- right/bottom blue cover -->
<div class="a" style="left:1664px;top:0;width:20px;height:741px;background:#2f6fac"></div>
<div class="a" style="left:0;top:724px;width:1680px;height:20px;background:#2f6fac"></div>
<div class="a" style="left:0;top:0;width:17px;height:741px;background:#2f6fac"></div>
<div class="a" style="left:0;top:0;width:1680px;height:67px;background:#2f6fac"></div>
<div class="a" style="left:17px;top:67px;width:1647px;height:1px;background:#93afca"></div>
<div class="a" style="left:17px;top:67px;width:1px;height:657px;background:#93b0cc"></div>
<div class="a" style="left:1663px;top:67px;width:1px;height:657px;background:#9fbbd5"></div>
<div class="a" style="left:17px;top:723px;width:1647px;height:1px;background:#a6bfd7"></div>
</body></html>
